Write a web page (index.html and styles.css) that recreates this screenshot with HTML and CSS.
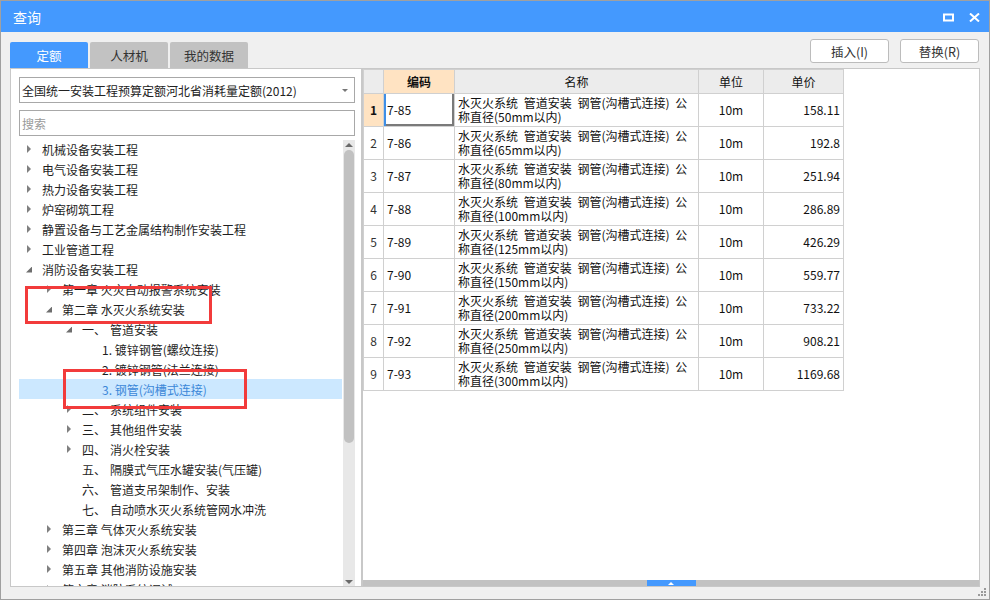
FILE: index.html
```html
<!DOCTYPE html>
<html lang="zh">
<head>
<meta charset="utf-8">
<title>查询</title>
<link rel="stylesheet" href="styles.css">
</head>
<body>
<div class="window">
  <div class="titlebar">
    <span class="title">查询</span>
    <div class="winctl">
      <svg class="ico-max" width="11" height="9" viewBox="0 0 11 9"><rect x="1" y="1.5" width="9" height="6" fill="none" stroke="#fff" stroke-width="2"/></svg>
      <svg class="ico-close" width="11" height="9" viewBox="0 0 11 9"><path d="M1 0.5 L10 8.5 M10 0.5 L1 8.5" stroke="#fff" stroke-width="2"/></svg>
    </div>
  </div>

  <div class="toolbar">
    <div class="tabs">
      <div class="tab active">定额</div>
      <div class="tab">人材机</div>
      <div class="tab">我的数据</div>
    </div>
    <div class="actions">
      <button class="btn">插入(I)</button>
      <button class="btn">替换(R)</button>
    </div>
  </div>

  <div class="main">
    <div class="left">
      <div class="select"><span>全国统一安装工程预算定额河北省消耗量定额(2012)</span><span class="caret"></span></div>
      <div class="search">搜索</div>
      <div class="treewrap">
        <ul class="tree">
          <li class="row l0"><span class="ar c"></span>机械设备安装工程</li>
          <li class="row l0"><span class="ar c"></span>电气设备安装工程</li>
          <li class="row l0"><span class="ar c"></span>热力设备安装工程</li>
          <li class="row l0"><span class="ar c"></span>炉窑砌筑工程</li>
          <li class="row l0"><span class="ar c"></span>静置设备与工艺金属结构制作安装工程</li>
          <li class="row l0"><span class="ar c"></span>工业管道工程</li>
          <li class="row l0"><span class="ar e"></span>消防设备安装工程</li>
          <li class="row l1"><span class="ar c"></span>第一章 火灾自动报警系统安装</li>
          <li class="row l1"><span class="ar e"></span>第二章 水灭火系统安装</li>
          <li class="row l2"><span class="ar e"></span><span class="num">一、</span>管道安装</li>
          <li class="row l3"><span class="ar n"></span>1. 镀锌钢管(螺纹连接)</li>
          <li class="row l3"><span class="ar n"></span>2. 镀锌钢管(法兰连接)</li>
          <li class="row l3 selected"><span class="ar n"></span>3. 钢管(沟槽式连接)</li>
          <li class="row l2"><span class="ar c"></span><span class="num">二、</span>系统组件安装</li>
          <li class="row l2"><span class="ar c"></span><span class="num">三、</span>其他组件安装</li>
          <li class="row l2"><span class="ar c"></span><span class="num">四、</span>消火栓安装</li>
          <li class="row l2"><span class="ar n"></span><span class="num">五、</span>隔膜式气压水罐安装(气压罐)</li>
          <li class="row l2"><span class="ar n"></span><span class="num">六、</span>管道支吊架制作、安装</li>
          <li class="row l2"><span class="ar n"></span><span class="num">七、</span>自动喷水灭火系统管网水冲洗</li>
          <li class="row l1"><span class="ar c"></span>第三章 气体灭火系统安装</li>
          <li class="row l1"><span class="ar c"></span>第四章 泡沫灭火系统安装</li>
          <li class="row l1"><span class="ar c"></span>第五章 其他消防设施安装</li>
          <li class="row l1"><span class="ar c"></span>第六章 消防系统调试</li>
        </ul>
        <div class="vscroll">
          <span class="sc-up"></span>
          <span class="sc-thumb"></span>
          <span class="sc-fill"></span>
          <span class="sc-down"></span>
        </div>
      </div>
    </div>

    <div class="right">
      <table class="grid">
        <colgroup>
          <col class="c-idx"><col class="c-code"><col class="c-name"><col class="c-unit"><col class="c-price">
        </colgroup>
        <thead>
          <tr><th></th><th class="hl">编码</th><th>名称</th><th>单位</th><th>单价</th></tr>
        </thead>
        <tbody>
          <tr><td class="idx cur">1</td><td class="code active">7-85</td><td class="name">水灭火系统 管道安装 钢管(沟槽式连接) 公<br>称直径(50mm以内)</td><td class="unit">10m</td><td class="price">158.11</td></tr>
          <tr><td class="idx">2</td><td class="code">7-86</td><td class="name">水灭火系统 管道安装 钢管(沟槽式连接) 公<br>称直径(65mm以内)</td><td class="unit">10m</td><td class="price">192.8</td></tr>
          <tr><td class="idx">3</td><td class="code">7-87</td><td class="name">水灭火系统 管道安装 钢管(沟槽式连接) 公<br>称直径(80mm以内)</td><td class="unit">10m</td><td class="price">251.94</td></tr>
          <tr><td class="idx">4</td><td class="code">7-88</td><td class="name">水灭火系统 管道安装 钢管(沟槽式连接) 公<br>称直径(100mm以内)</td><td class="unit">10m</td><td class="price">286.89</td></tr>
          <tr><td class="idx">5</td><td class="code">7-89</td><td class="name">水灭火系统 管道安装 钢管(沟槽式连接) 公<br>称直径(125mm以内)</td><td class="unit">10m</td><td class="price">426.29</td></tr>
          <tr><td class="idx">6</td><td class="code">7-90</td><td class="name">水灭火系统 管道安装 钢管(沟槽式连接) 公<br>称直径(150mm以内)</td><td class="unit">10m</td><td class="price">559.77</td></tr>
          <tr><td class="idx">7</td><td class="code">7-91</td><td class="name">水灭火系统 管道安装 钢管(沟槽式连接) 公<br>称直径(200mm以内)</td><td class="unit">10m</td><td class="price">733.22</td></tr>
          <tr><td class="idx">8</td><td class="code">7-92</td><td class="name">水灭火系统 管道安装 钢管(沟槽式连接) 公<br>称直径(250mm以内)</td><td class="unit">10m</td><td class="price">908.21</td></tr>
          <tr><td class="idx">9</td><td class="code">7-93</td><td class="name">水灭火系统 管道安装 钢管(沟槽式连接) 公<br>称直径(300mm以内)</td><td class="unit">10m</td><td class="price">1169.68</td></tr>
        </tbody>
      </table>
      <div class="spacer"></div>
      <div class="hbar"><span class="handle"></span></div>
    </div>
  </div>

  <svg class="grip" width="9" height="9" viewBox="0 0 9 9">
    <rect x="6" y="0" width="2" height="2" fill="#9a9a9a"/>
    <rect x="3" y="3" width="2" height="2" fill="#9a9a9a"/>
    <rect x="6" y="3" width="2" height="2" fill="#9a9a9a"/>
    <rect x="0" y="6" width="2" height="2" fill="#9a9a9a"/>
    <rect x="3" y="6" width="2" height="2" fill="#9a9a9a"/>
    <rect x="6" y="6" width="2" height="2" fill="#9a9a9a"/>
  </svg>

  <div class="mark mark-a"></div>
  <div class="mark mark-b"></div>
</div>
</body>
</html>
```

FILE: styles.css
```css
body {
  margin: 0;
  font-family: "Noto Sans CJK SC", "Noto Sans", sans-serif;
  font-size: 12px;
  color: #222;
}

.window {
  position: relative;
  width: 990px;
  height: 600px;
  box-sizing: border-box;
  border: 1px solid #a0a0a0;
  background: #f0f0f0;
  display: flex;
  flex-direction: column;
  overflow: hidden;
}

/* title bar */
.titlebar {
  height: 31px;
  flex: none;
  background: #4499fe;
  color: #fff;
  display: flex;
  align-items: center;
  justify-content: space-between;
  padding: 0 9px 0 12px;
  font-size: 14px;
}
.winctl {
  display: flex;
  align-items: center;
  gap: 15px;
  margin-top: 1px;
}

/* toolbar with tabs and buttons */
.toolbar {
  height: 36px;
  flex: none;
  display: flex;
  justify-content: space-between;
  padding: 0 10px 0 9px;
}
.tabs {
  align-self: flex-end;
  display: flex;
  gap: 2px;
}
.tab {
  width: 78px;
  height: 26px;
  display: flex;
  align-items: center;
  justify-content: center;
  background: #c2c2c2;
  color: #333;
  border-radius: 2px 2px 0 0;
  font-size: 12.5px;
}
.tab.active {
  background: #4499fe;
  color: #fff;
}
.actions {
  align-self: flex-start;
  margin-top: 7px;
  display: flex;
  gap: 11px;
}
.btn {
  width: 79px;
  height: 24px;
  background: #fff;
  border: 1px solid #bcbcbc;
  border-radius: 3px;
  font-family: inherit;
  font-size: 12.5px;
  color: #333;
  padding: 0;
}

/* main area */
.main {
  flex: 1;
  min-height: 0;
  display: flex;
  padding: 0 9px 12px 9px;
}

.left {
  width: 352px;
  flex: none;
  box-sizing: border-box;
  border: 1px solid #c8c8c8;
  background: #fff;
  display: flex;
  flex-direction: column;
  padding: 8px 6px 0 8px;
}
.select {
  height: 26px;
  flex: none;
  box-sizing: border-box;
  border: 1px solid #a8a8a8;
  display: flex;
  align-items: center;
  justify-content: space-between;
  padding: 0 6px 0 2px;
  color: #222;
}
.caret {
  width: 0;
  height: 0;
  border-left: 3px solid transparent;
  border-right: 3px solid transparent;
  border-top: 3px solid #777;
}
.search {
  height: 26px;
  flex: none;
  margin-top: 7px;
  box-sizing: border-box;
  border: 1px solid #a8a8a8;
  display: flex;
  align-items: center;
  padding-left: 2px;
  color: #9a9a9a;
}

.treewrap {
  flex: 1;
  min-height: 0;
  margin-top: 3px;
  display: flex;
  overflow: hidden;
}
.tree {
  flex: 1;
  list-style: none;
  margin: 0;
  padding: 0;
}
.row {
  height: 20px;
  display: flex;
  align-items: center;
  white-space: nowrap;
  color: #1e1e1e;
}
.row.l1 { padding-left: 20px; }
.row.l2 { padding-left: 40px; }
.row.l3 { padding-left: 60px; }
.row.selected {
  background: #cce8ff;
  color: #3b87d8;
}
.ar {
  width: 23px;
  flex: none;
  height: 20px;
  display: flex;
  align-items: center;
  box-sizing: border-box;
}
.ar.c::before {
  content: "";
  margin-left: 8px;
  width: 0;
  height: 0;
  border-top: 4px solid transparent;
  border-bottom: 4px solid transparent;
  border-left: 4px solid #808080;
}
.ar.e::before {
  content: "";
  margin-left: 7px;
  margin-top: 1px;
  width: 6px;
  height: 6px;
  background: #6e6e6e;
  clip-path: polygon(100% 0, 100% 100%, 0 100%);
}
.num {
  width: 28px;
  flex: none;
}

.vscroll {
  width: 12px;
  flex: none;
  margin-left: 1px;
  margin-top: 1px;
  background: #e8e8e8;
  display: flex;
  flex-direction: column;
  align-items: center;
}
.sc-up {
  margin-top: 3px;
  width: 0;
  height: 0;
  border-left: 4px solid transparent;
  border-right: 4px solid transparent;
  border-bottom: 4px solid #6a6a6a;
}
.sc-thumb {
  margin-top: 3px;
  width: 10px;
  height: 293px;
  background: #c1c1c1;
  border-radius: 5px;
}
.sc-fill { flex: 1; }
.sc-down {
  margin-bottom: 2px;
  width: 0;
  height: 0;
  border-left: 4px solid transparent;
  border-right: 4px solid transparent;
  border-top: 4px solid #6a6a6a;
}

/* right panel */
.right {
  flex: 1;
  min-width: 0;
  box-sizing: border-box;
  border: 1px solid #c8c8c8;
  background: #fff;
  display: flex;
  flex-direction: column;
}
.grid {
  border-collapse: collapse;
  table-layout: fixed;
  width: 481px;
  font-size: 12px;
  color: #111;
}
.c-idx { width: 20px; }
.c-code { width: 71px; }
.c-name { width: 244px; }
.c-unit { width: 65px; }
.c-price { width: 80px; }
.grid th,
.grid td {
  border: 1px solid #d0d0d0;
  padding: 0 3px;
  white-space: nowrap;
  overflow: hidden;
}
.grid thead tr { height: 24px; }
.grid th {
  background: #ececec;
  font-weight: normal;
  color: #111;
}
.grid th.hl {
  background: #ffe3c2;
  font-weight: bold;
}
.grid tbody tr { height: 33px; }
.grid td { line-height: 14px; }
.grid td.name { word-spacing: 3px; }
.grid td.idx {
  text-align: center;
  padding: 0;
  color: #333;
}
.grid td.idx.cur {
  background: #ffe3c2;
  font-weight: bold;
  color: #111;
}
.grid td.code.active {
  box-shadow: inset 2px 0 0 #3f8fe6, inset -2px -2px 0 #7a7a7a;
}
.grid td.unit { text-align: center; }
.grid td.price { text-align: right; }

.spacer { flex: 1; }
.hbar {
  height: 6px;
  flex: none;
  background: #c2c2c2;
  display: flex;
  justify-content: center;
}
.handle {
  width: 49px;
  height: 6px;
  background: #4499fe;
  display: flex;
  align-items: center;
  justify-content: center;
}
.handle::before {
  content: "";
  width: 0;
  height: 0;
  border-left: 3px solid transparent;
  border-right: 3px solid transparent;
  border-bottom: 3px solid #fff;
}

/* overlays */
.grip {
  position: absolute;
  right: 2px;
  bottom: 2px;
}
.mark {
  position: absolute;
  box-sizing: border-box;
  border: 3px solid #f23b3b;
}
.mark-a {
  left: 24px;
  top: 285px;
  width: 187px;
  height: 38px;
}
.mark-b {
  left: 62px;
  top: 368px;
  width: 184px;
  height: 40px;
}
```
